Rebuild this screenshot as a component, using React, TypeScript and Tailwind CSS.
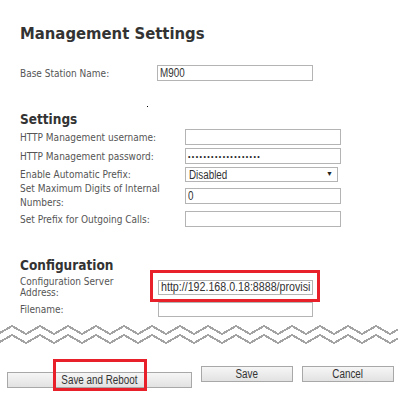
import React from "react";

const labelFont = { fontFamily: '"DejaVu Sans Condensed", "DejaVu Sans", sans-serif' };
const arial = { fontFamily: '"Liberation Sans", Arial, sans-serif' };

function Zigzag() {
  const pts = (y0: number) => {
    const arr: string[] = [];
    for (let k = -1; k < 16; k++) {
      const x = 12 + 28 * k;
      arr.push(`${x},${y0}`);
      arr.push(`${x + 14},${y0 + 8}`);
    }
    return arr.join(" ");
  };
  return (
    <svg width="398" height="22" viewBox="0 0 398 22" className="block" shapeRendering="crispEdges">
      <polyline points={pts(3)} fill="none" stroke="#a3a3a3" strokeWidth="2" />
      <polyline points={pts(12)} fill="none" stroke="#a3a3a3" strokeWidth="2" />
    </svg>
  );
}

function Narrow({ children, center = false }: { children: React.ReactNode; center?: boolean }) {
  return (
    <span className={`inline-block whitespace-nowrap scale-x-[0.82] ${center ? "origin-center" : "origin-left"}`}>
      {children}
    </span>
  );
}

function TextBox({ value, w = 156, h = 16, dots = false, size = "text-[12px]" }: { value?: string; w?: number; h?: number; dots?: boolean; size?: string }) {
  return (
    <div
      className={`border border-[#b4b4b4] bg-white flex items-center px-[2px] overflow-hidden whitespace-nowrap text-[#333] ${size}`}
      style={{ width: w, height: h, ...arial }}
    >
      {dots ? (
        <span className="text-[7px] tracking-[1.4px] text-[#222] leading-none">•••••••••••••••••••</span>
      ) : value ? (
        <Narrow>{value}</Narrow>
      ) : null}
    </div>
  );
}

export default function App() {
  return (
    <div className="w-[398px] h-[396px] bg-white overflow-hidden">
      <div className="pl-[20px] pt-[24px]">
        <h1 className="text-[16.5px] leading-[20px] font-bold text-[#333]" style={labelFont}>
          Management Settings
        </h1>

        <div className="mt-[21px] flex items-center h-[16px]">
          <div className="w-[137px] text-[10px] text-[#555]" style={labelFont}>Base Station Name:</div>
          <TextBox value="M900" />
        </div>

        <div className="h-[29px] relative">
          <div className="absolute left-[127px] top-[25px] w-[1px] h-[1px] bg-black" />
        </div>

        <h2 className="text-[13.5px] leading-[18px] font-bold text-[#333]" style={labelFont}>Settings</h2>

        <div className="mt-[1px] flex items-center h-[16px]">
          <div className="w-[165px] text-[10px] text-[#555]" style={labelFont}>HTTP Management username:</div>
          <TextBox />
        </div>
        <div className="mt-[3px] flex items-center h-[16px]">
          <div className="w-[165px] text-[10px] text-[#555]" style={labelFont}>HTTP Management password:</div>
          <TextBox dots />
        </div>
        <div className="mt-[3px] flex items-center h-[15px]">
          <div className="w-[165px] text-[10px] text-[#555]" style={labelFont}>Enable Automatic Prefix:</div>
          <div
            className="w-[153px] h-[15px] border border-[#b4b4b4] bg-white flex items-center justify-between pl-[3px] pr-[4px] text-[12px] text-[#333]"
            style={arial}
          >
            <Narrow>Disabled</Narrow>
            <span className="text-[7px] text-[#222]">▼</span>
          </div>
        </div>
        <div className="flex items-center h-[28px]">
          <div className="w-[165px] text-[10px] leading-[14px] text-[#555] pr-[10px]" style={labelFont}>
            Set Maximum Digits of Internal Numbers:
          </div>
          <TextBox value="0" />
        </div>
        <div className="mt-[1px] flex items-center h-[16px]">
          <div className="w-[165px] text-[10px] text-[#555]" style={labelFont}>Set Prefix for Outgoing Calls:</div>
          <TextBox />
        </div>

        <h2 className="mt-[29px] text-[13.5px] leading-[18px] font-bold text-[#333]" style={labelFont}>Configuration</h2>

        <div className="mt-[2px] flex items-center h-[22px]">
          <div className="w-[138px] text-[10px] leading-[11px] text-[#555]" style={labelFont}>
            Configuration Server
            <br />
            Address:
          </div>
          <div className="relative">
            <TextBox value="http://192.168.0.18:8888/provisi" h={15} w={155} size="text-[13px]" />
            <div className="absolute left-[-8px] top-[-10px] w-[170px] h-[32px] border-[3px] border-[#e8202a]" />
          </div>
        </div>
        <div className="mt-[4px] flex items-center h-[15px]">
          <div className="w-[138px] text-[10px] text-[#555]" style={labelFont}>Filename:</div>
          <TextBox h={15} w={155} />
        </div>
      </div>

      <div className="mt-[6px]">
        <Zigzag />
      </div>

      <div className="mt-[21px] pl-[7px] flex gap-[9px]">
        <div className="relative">
          <button
            className="w-[185px] h-[16px] border border-[#a8a8a8] bg-gradient-to-b from-[#f6f6f6] to-[#e2e2e2] text-[12px] leading-[14px] text-[#333]"
            style={arial}
          >
            <Narrow center>Save and Reboot</Narrow>
          </button>
          <div className="absolute left-[46px] top-[-7px] w-[94px] h-[32px] border-[3px] border-[#e8202a]" />
        </div>
        <button
          className="w-[92px] h-[16px] border border-[#a8a8a8] bg-gradient-to-b from-[#f6f6f6] to-[#e2e2e2] text-[12px] leading-[14px] text-[#333]"
          style={arial}
        >
          <Narrow center>Save</Narrow>
        </button>
        <button
          className="w-[92px] h-[16px] border border-[#a8a8a8] bg-gradient-to-b from-[#f6f6f6] to-[#e2e2e2] text-[12px] leading-[14px] text-[#333]"
          style={arial}
        >
          <Narrow center>Cancel</Narrow>
        </button>
      </div>
    </div>
  );
}
